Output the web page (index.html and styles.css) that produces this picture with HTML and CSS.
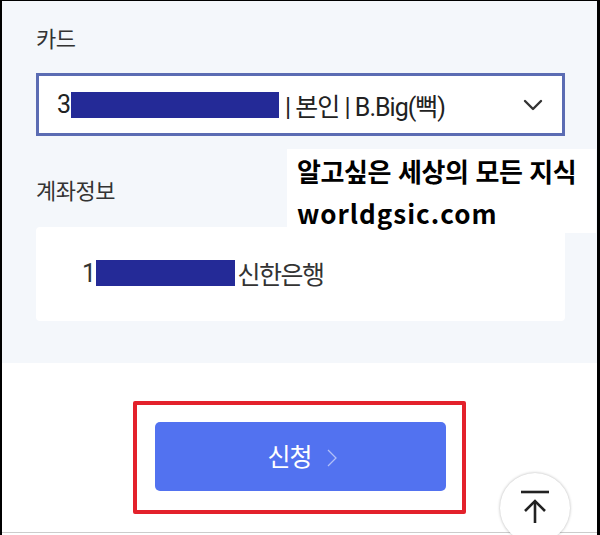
FILE: index.html
```html
<!DOCTYPE html>
<html lang="ko">

<head>
    <meta charset="UTF-8">
    <meta name="viewport" content="width=device-width, initial-scale=1.0">
    <title>카드 신청</title>
    <link rel="stylesheet" href="styles.css">
</head>

<body>
    <div class="screen">
        <div class="form-area">
            <p class="field-label label-card">카드</p>
            <div class="select-box">
                <span class="select-text">3<span class="mask mask-card"></span>| 본인 | B.Big(뻑)</span>
                <svg class="chevron" width="20" height="12" viewBox="0 0 20 12">
                    <path d="M2 2 L10 10 L18 2" fill="none" stroke="#333" stroke-width="2.4" stroke-linecap="round" stroke-linejoin="round" />
                </svg>
            </div>
            <p class="field-label label-account">계좌정보</p>
            <div class="account-card">
                <span class="account-text">1<span class="mask mask-account"></span>신한은행</span>
            </div>
        </div>

        <div class="action-area">
            <div class="highlight">
                <button class="apply-btn">신청<svg class="btn-arrow" width="12" height="20" viewBox="0 0 12 20">
                        <path d="M2 2 L10 10 L2 18" fill="none" stroke="rgba(255,255,255,0.55)" stroke-width="1.3" />
                    </svg></button>
            </div>
        </div>

        <div class="bottom-bar"></div>

        <!-- watermark laid over the form -->
        <div class="watermark">
            <p>알고싶은 세상의 모든 지식</p>
            <p class="wm-url">worldgsic.com</p>
        </div>

        <!-- floating scroll to top -->
        <div class="to-top">
            <svg width="36" height="40" viewBox="0 0 36 40">
                <path d="M4 3 H32" stroke="#222" stroke-width="2.6" />
                <path d="M18 12 V34" stroke="#222" stroke-width="2.6" />
                <path d="M8 22 L18 12 L28 22" fill="none" stroke="#222" stroke-width="2.6" />
            </svg>
        </div>
    </div>
</body>

</html>
```

FILE: styles.css
```css
* {
    box-sizing: border-box;
}

body {
    margin: 0;
    font-family: Roboto, "Noto Sans CJK KR", sans-serif;
    background: #fff;
}

.screen {
    position: relative;
    width: 600px;
    height: 535px;
    overflow: hidden;
    border-top: 1px solid #000;
    border-left: 2px solid #000;
    border-right: 3px solid #000;
    display: flex;
    flex-direction: column;
}

.form-area {
    background-color: #f4f7fb;
    height: 362px;
    padding: 0 32px 0 34px;
}

.field-label {
    margin: 0;
    font-size: 22px;
    line-height: 30px;
    color: #333;
    letter-spacing: -0.5px;
}

.label-card {
    margin-top: 24px;
}

.label-account {
    margin-top: 41px;
}

.select-box {
    margin-top: 18px;
    height: 63px;
    background: #fff;
    border: 3px solid #5b6cb3;
    display: flex;
    align-items: center;
    justify-content: space-between;
    padding: 0 19px 0 18px;
}

.select-text,
.account-text {
    display: flex;
    align-items: center;
    font-size: 25px;
    color: #222;
    letter-spacing: -1px;
}

.mask {
    display: inline-block;
    background-color: #242a97;
    height: 26px;
}

.mask-card {
    width: 208px;
    margin: 0 6px 0 1px;
}

.mask-account {
    width: 139px;
    margin: 0 3px 0 1px;
}

.account-card {
    margin-top: 20px;
    height: 94px;
    background: #fff;
    border-radius: 4px;
    display: flex;
    align-items: center;
    padding-left: 46px;
    padding-bottom: 2px;
}

.account-text {
    color: #333;
    letter-spacing: -1.5px;
}

.action-area {
    flex: 1;
    display: flex;
    justify-content: center;
    align-items: flex-start;
    padding-top: 38px;
}

.highlight {
    border: 4px solid #e3212b;
    border-radius: 2px;
    padding: 17px 16px 19px 18px;
}

.apply-btn {
    width: 291px;
    height: 69px;
    border: none;
    border-radius: 5px;
    background-color: #5272f0;
    color: #fff;
    font-family: inherit;
    font-size: 25px;
    letter-spacing: -1px;
    display: flex;
    align-items: center;
    justify-content: center;
    gap: 14px;
    padding: 0 0 4px 4px;
}

.btn-arrow {
    margin-top: 6px;
}

.bottom-bar {
    height: 3px;
    border-top: 1px solid #ccc;
    background: #fff;
}

.watermark {
    position: absolute;
    left: 285px;
    top: 148px;
    width: 309px;
    height: 84px;
    background: #fff;
    padding: 1px 0 0 10px;
}

.watermark p {
    margin: 0;
    font-family: "Noto Sans CJK KR", sans-serif;
    font-weight: 700;
    font-size: 26px;
    line-height: 42px;
    color: #000;
    letter-spacing: -0.4px;
}

.watermark .wm-url {
    letter-spacing: 1px;
}

.to-top {
    position: absolute;
    left: 498px;
    top: 472px;
    width: 70px;
    height: 70px;
    border-radius: 50%;
    background: #fff;
    box-shadow: 0 0 3px rgba(0, 0, 0, 0.3);
    display: flex;
    justify-content: center;
    padding-top: 16px;
}
```
